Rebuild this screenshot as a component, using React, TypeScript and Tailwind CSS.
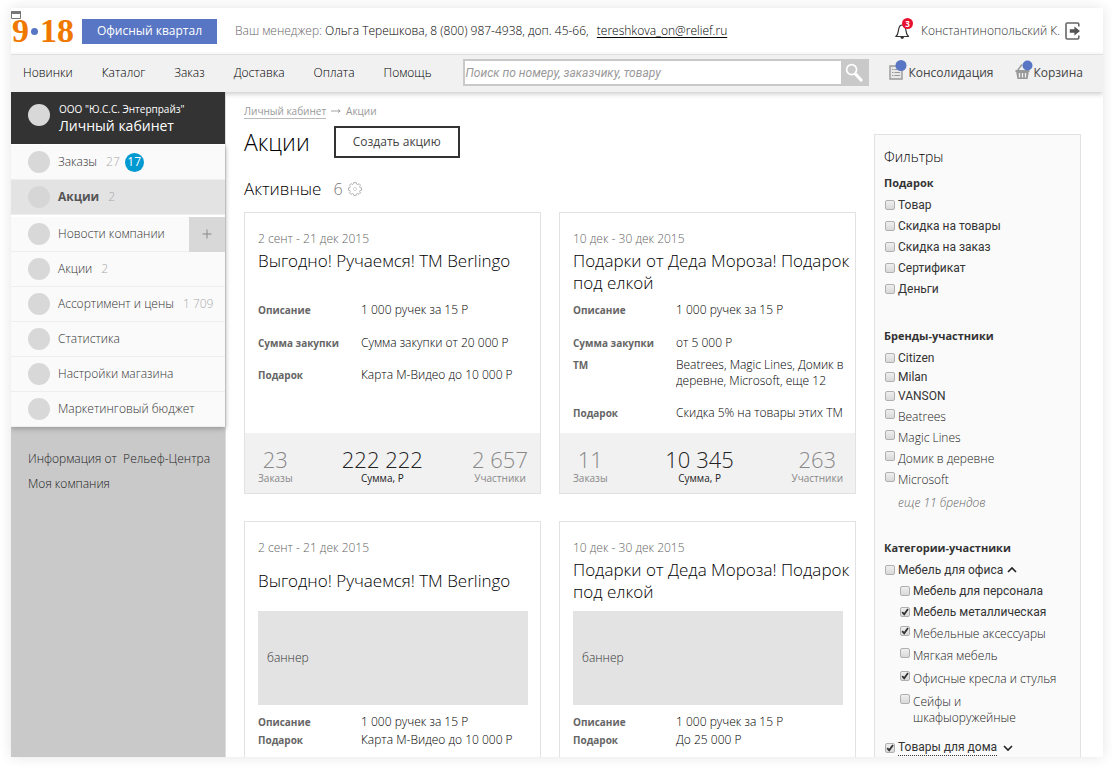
import React from "react";

const sans = "font-['Open_Sans','Noto_Sans',sans-serif]";
const roboto = "font-[Roboto,'Liberation_Sans',sans-serif]";

const navLinks = ["Новинки", "Каталог", "Заказ", "Доставка", "Оплата", "Помощь"];

type Row = { label: string; value: string; space: string };
type Promo = {
  id: number;
  date: string;
  title: string;
  banner?: boolean;
  rows: Row[];
  stats?: { orders: string; sum: string; people: string };
};

const promos: Promo[] = [
  {
    id: 1,
    date: "2 сент - 21 дек 2015",
    title: "Выгодно! Ручаемся! ТМ Berlingo",
    rows: [
      { label: "Описание", value: "1 000 ручек за 15 Р", space: "mt-2" },
      { label: "Сумма закупки", value: "Сумма закупки от 20 000 Р", space: "mt-[17px]" },
      { label: "Подарок", value: "Карта М-Видео до 10 000 Р", space: "mt-4" },
    ],
    stats: { orders: "23", sum: "222 222", people: "2 657" },
  },
  {
    id: 2,
    date: "10 дек - 30 дек 2015",
    title: "Подарки от Деда Мороза! Подарок под елкой",
    rows: [
      { label: "Описание", value: "1 000 ручек за 15 Р", space: "mt-2" },
      { label: "Сумма закупки", value: "от 5 000 Р", space: "mt-[17px]" },
      { label: "ТМ", value: "Beatrees, Magic Lines, Домик в деревне, Microsoft, еще 12", space: "mt-1.5" },
      { label: "Подарок", value: "Скидка 5% на товары этих ТМ", space: "mt-4" },
    ],
    stats: { orders: "11", sum: "10 345", people: "263" },
  },
  {
    id: 3,
    date: "2 сент - 21 дек 2015",
    title: "Выгодно! Ручаемся! ТМ Berlingo",
    banner: true,
    rows: [
      { label: "Описание", value: "1 000 ручек за 15 Р", space: "mt-[9px]" },
      { label: "Подарок", value: "Карта М-Видео до 10 000 Р", space: "mt-0.5" },
    ],
  },
  {
    id: 4,
    date: "10 дек - 30 дек 2015",
    title: "Подарки от Деда Мороза! Подарок под елкой",
    banner: true,
    rows: [
      { label: "Описание", value: "1 000 ручек за 15 Р", space: "mt-[9px]" },
      { label: "Подарок", value: "До 25 000 Р", space: "mt-0.5" },
    ],
  },
];

function Stat({ value, label, strong }: { value: string; label: string; strong?: boolean }) {
  return (
    <div className={strong ? "text-center text-[#222]" : "text-center text-[#888]"}>
      <div className="text-[22px] leading-6">{value}</div>
      <div className="text-[10px] leading-3.5 font-normal">{label}</div>
    </div>
  );
}

function Card({ promo }: { promo: Promo }) {
  return (
    <article className="flex min-w-0 flex-col border border-[#e2e2e2] bg-white">
      <div className="flex-1 pt-[18px] pr-1 pb-3 pl-[13px]">
        <p className="text-[12px] leading-4 text-[#666]">{promo.date}</p>
        <h3
          className={
            promo.banner
              ? "mt-[3px] flex min-h-11 items-center text-[17px] leading-[22px] text-black"
              : "mt-[3px] min-h-11 text-[17px] leading-[22px] text-black"
          }
        >
          {promo.title}
        </h3>
        {promo.banner && (
          <div className="mt-2 mr-2 flex h-[94px] items-center bg-[#e3e3e3] pl-[9px] text-[12px] text-[#333]">баннер</div>
        )}
        <dl>
          {promo.rows.map((r) => (
            <div key={r.label} className={`flex ${r.space}`}>
              <dt className="w-[103px] shrink-0 text-[10px] leading-4 font-bold text-[#666]">{r.label}</dt>
              <dd className="min-w-0 text-[12px] leading-4 text-black">{r.value}</dd>
            </div>
          ))}
        </dl>
      </div>
      {promo.stats && (
        <div className="flex h-[60px] shrink-0 items-start justify-between bg-[#f1f1f1] pt-3.5 pr-3 pl-[13px]">
          <Stat value={promo.stats.orders} label="Заказы" />
          <Stat value={promo.stats.sum} label="Сумма, Р" strong />
          <Stat value={promo.stats.people} label="Участники" />
        </div>
      )}
    </article>
  );
}

function Check({
  label,
  checked,
  light,
  dotted,
  row = "min-h-[21px]",
  arrow,
}: {
  label: string;
  checked?: boolean;
  light?: boolean;
  dotted?: boolean;
  row?: string;
  arrow?: "up" | "down";
}) {
  return (
    <label className={`flex items-start ${row}`}>
      <span className={light ? "relative flex h-2.5 w-[13px] shrink-0" : "relative mt-[3px] flex h-2.5 w-[13px] shrink-0"}>
        <input
          type="checkbox"
          defaultChecked={checked}
          className="peer size-2.5 appearance-none rounded-[2px] border border-[#b0b0b0] bg-linear-to-b from-[#efefef] to-[#d9d9d9]"
        />
        <svg viewBox="0 0 10 10" className="pointer-events-none absolute top-0 left-0 hidden size-2.5 peer-checked:block">
          <path d="M2.2 5.2 4.2 7.3 8 2" fill="none" stroke="#333" strokeWidth="1.8" />
        </svg>
      </span>
      <span
        className={
          light
            ? `${sans} text-[12px] leading-4 text-[#222]`
            : dotted
              ? `${roboto} border-b border-dotted border-[#333] text-[12px] leading-[15px] font-normal text-[#333]`
              : `${roboto} text-[12px] leading-4 font-normal text-[#333]`
        }
      >
        {label}
      </span>
      {arrow && (
        <svg viewBox="0 0 10 10" className={arrow === "up" ? "mt-[3px] ml-1 size-2.5" : "mt-[3px] ml-1.5 size-2.5"}>
          <path d={arrow === "up" ? "M1 7 5 3 9 7" : "M1 3 5 7 9 3"} fill="none" stroke="#222" strokeWidth="1.6" />
        </svg>
      )}
    </label>
  );
}

function SideItem({
  label,
  count,
  badge,
  active,
  plus,
}: {
  label: string;
  count?: string;
  badge?: string;
  active?: boolean;
  plus?: boolean;
}) {
  return (
    <li
      className={
        active
          ? "mb-0.5 flex h-[35px] items-center border-b border-[#eee] bg-[#e3e3e3] pl-[17px]"
          : "flex h-[35px] items-center border-b border-[#eee] bg-[#fafafa] pl-[17px]"
      }
    >
      <span className={active ? "size-[22px] rounded-full bg-[#d6d6d6]" : "size-[22px] rounded-full bg-[#d8d8d8]"} />
      <a
        href="#"
        className={active ? "ml-2 text-[12px] font-bold text-[#555]" : "ml-2 text-[12px] whitespace-nowrap text-[#333]"}
      >
        {label}
      </a>
      {count && <span className="ml-[9px] text-[12px] whitespace-nowrap text-[#aaa]">{count}</span>}
      {badge && (
        <span className="ml-[5px] flex size-[19px] items-center justify-center rounded-full bg-[#0099d0] text-[12px] font-normal text-white">
          {badge}
        </span>
      )}
      {plus && (
        <button
          type="button"
          aria-label="Добавить новость"
          className="ml-auto flex h-[35px] w-9 items-center justify-center bg-[#d8d8d8]"
        >
          <svg viewBox="0 0 10 10" className="size-2.5">
            <path d="M5 0.5V9.5M0.5 5H9.5" stroke="#888" strokeWidth="1" />
          </svg>
        </button>
      )}
    </li>
  );
}

function Header() {
  return (
    <header className="flex h-[46px] shrink-0 items-center bg-white pr-[22px]">
      <a href="#" aria-label="9-18" className="relative flex h-full w-[71px] shrink-0 items-center">
        <svg viewBox="0 0 10 8" className="absolute top-[3px] left-0 h-2 w-2.5">
          <path d="M0.5 0.5H9.5V7.5H0.5Z" fill="#fff" stroke="#777" />
          <path d="M0 0H10V3H0Z" fill="#777" />
        </svg>
        <span className="flex items-center pl-px font-['Liberation_Serif',serif] text-[34px] leading-8 font-bold text-[#f07800]">
          <span>9</span>
          <span className="mx-0.5 size-[7px] rounded-full bg-[#5976c4]" />
          <span>1</span>
          <span>8</span>
        </span>
      </a>
      <a
        href="#"
        className="flex h-[25px] w-[135px] items-center justify-center bg-[#5976c4] text-[12px] font-normal whitespace-nowrap text-white"
      >
        Офисный квартал
      </a>
      <p className="ml-[18px] text-[12px] whitespace-nowrap text-black">
        <span className="text-[#666]">Ваш менеджер:</span> Ольга Терешкова, 8 (800) 987-4938, доп. 45-66,{" "}
        <a href="mailto:tereshkova_on@relief.ru" className="ml-[5px] underline underline-offset-2">
          tereshkova_on@relief.ru
        </a>
      </p>
      <div className="ml-auto flex items-center">
        <button type="button" aria-label="Уведомления: 3" className="relative mr-2 h-5 w-[18px]">
          <svg viewBox="0 0 18 20" className="h-5 w-[18px]">
            <path
              d="M0.8 15.5C3.4 13.5 3.2 10.6 3.7 8 4.2 5.4 5.4 4 7.2 4 9 4 10.2 5.4 10.7 8 11.2 10.6 11 13.5 13.6 15.5Z"
              fill="#fff"
              stroke="#333"
              strokeWidth="1.2"
              strokeLinejoin="round"
            />
            <path d="M5.4 16C5.8 18.6 8.6 18.6 9 16Z" fill="#333" />
          </svg>
          <span className="absolute -top-[3px] right-0 flex size-[11px] items-center justify-center rounded-full bg-[#e8112d] text-[8px] leading-none font-bold text-white">
            3
          </span>
        </button>
        <span className="text-[12px] whitespace-nowrap text-[#333]">Константинопольский К.</span>
        <button type="button" aria-label="Выйти" className="ml-[5px]">
          <svg viewBox="0 0 16 18" className="h-[18px] w-4">
            <path d="M13.8 4.5V2.2Q13.8 1 12.6 1H2.2Q1 1 1 2.2V15.8Q1 17 2.2 17H12.6Q13.8 17 13.8 15.8V13.5" fill="none" stroke="#666" strokeWidth="1.6" />
            <path d="M4.8 7.2H9.4V4.6L15 9 9.4 13.4V10.8H4.8Z" fill="#555" />
          </svg>
        </button>
      </div>
    </header>
  );
}

function NavBar() {
  return (
    <nav className="relative z-10 flex h-[38px] shrink-0 items-center border-t border-[#e0e0e0] bg-[#f1f1f1] pr-5 pb-0.5 pl-3 shadow-[0_2px_5px_#ccc]">
      <div className="flex gap-[29px] text-[12px] text-black">
        {navLinks.map((l) => (
          <a key={l} href="#">
            {l}
          </a>
        ))}
      </div>
      <form className="ml-8 flex h-[27px] flex-1 border-2 border-[#c9c9c9] bg-white">
        <input
          type="text"
          aria-label="Поиск"
          placeholder="Поиск по номеру, заказчику, товару"
          className="min-w-0 flex-1 font-[Roboto,'Liberation_Sans',sans-serif] text-[12px] font-normal text-[#444] italic outline-none placeholder:text-[#999]"
        />
        <button type="button" aria-label="Найти" className="flex w-[26px] items-center justify-center bg-[#c9c9c9]">
          <svg viewBox="0 0 18 19" className="h-[19px] w-[18px]">
            <circle cx="6.6" cy="6.6" r="5" fill="none" stroke="#fff" strokeWidth="1.7" />
            <path d="M11 11.5 16 17" stroke="#fff" strokeWidth="3.2" strokeLinecap="round" />
          </svg>
        </button>
      </form>
      <a href="#" className="ml-5 flex items-center text-[12px] font-normal whitespace-nowrap text-[#444]">
        <svg viewBox="0 0 18 20" className="-mt-1.5 mr-px h-5 w-[18px]">
          <path d="M1 6H13V19H1Z" fill="#e8e8e8" stroke="#999" strokeWidth="1.4" />
          <path d="M3 9.5H4.4M5.4 9.5H11M3 12.5H4.4M5.4 12.5H11M3 15.5H4.4M5.4 15.5H11" stroke="#999" strokeWidth="1.2" />
          <circle cx="12" cy="5.5" r="5.5" fill="#5976c4" />
        </svg>
        Консолидация
      </a>
      <a href="#" className="ml-[22px] flex items-center text-[12px] font-normal whitespace-nowrap text-[#444]">
        <svg viewBox="0 0 18 20" className="-mt-1.5 h-5 w-[18px]">
          <path d="M2.5 10.5 7 4.5M12.5 10.5 9 5" stroke="#999" strokeWidth="1.4" />
          <path d="M0.5 10H14.5V12H13.8L12.6 19H2.4L1.2 12H0.5Z" fill="#999" />
          <path d="M4.5 13V17.5M7.5 13V17.5M10.5 13V17.5" stroke="#f1f1f1" strokeWidth="1.3" />
          <circle cx="12.5" cy="5.5" r="5" fill="#5976c4" />
        </svg>
        Корзина
      </a>
    </nav>
  );
}

function Sidebar() {
  return (
    <aside className="w-[215px] shrink-0 border-r border-[#ddd] bg-[#c9c9c9]">
      <div className="relative z-20 flex h-[52px] items-start bg-[#333] pt-3 pl-[17px]">
        <span className="size-[22px] shrink-0 rounded-full bg-[#d8d8d8]" />
        <div className="-mt-[3px] ml-[9px] font-normal text-white">
          <p className="text-[10px] leading-4">ООО "Ю.С.С. Энтерпрайз"</p>
          <p className="text-[14px] leading-[18px]">Личный кабинет</p>
        </div>
      </div>
      <ul className="bg-white pt-px shadow-[0_2px_5px_#999]">
        <SideItem label="Заказы" count="27" badge="17" />
        <SideItem label="Акции" count="2" active />
        <SideItem label="Новости компании" plus />
        <SideItem label="Акции" count="2" />
        <SideItem label="Ассортимент и цены" count="1 709" />
        <SideItem label="Статистика" />
        <SideItem label="Настройки магазина" />
        <SideItem label="Маркетинговый бюджет" />
      </ul>
      <div className="flex flex-col gap-[9px] pt-6 pl-[17px] text-[12px] leading-4 text-[#222]">
        <a href="#">Информация от&nbsp; Рельеф-Центра</a>
        <a href="#">Моя компания</a>
      </div>
    </aside>
  );
}

function Filters() {
  return (
    <aside className="mt-[42px] w-[207px] shrink-0 border border-b-0 border-[#e2e2e2] bg-[#fafafa] pr-4 pl-[9px]">
      <h2 className="pt-3 text-[14px] leading-5 text-black">Фильтры</h2>
      <h3 className="mt-2 text-[11px] leading-4 font-bold text-[#333]">Подарок</h3>
      <div className="mt-1.5 pl-px">
        <Check label="Товар" />
        <Check label="Скидка на товары" />
        <Check label="Скидка на заказ" />
        <Check label="Сертификат" />
        <Check label="Деньги" />
      </div>
      <h3 className="mt-[26px] text-[11px] leading-4 font-bold text-[#333]">Бренды-участники</h3>
      <div className="mt-1.5 pl-px">
        <Check label="Citizen" row="min-h-[19px]" />
        <Check label="Milan" row="min-h-[19px]" />
        <Check label="VANSON" row="min-h-[21px]" />
        <Check label="Beatrees" light />
        <Check label="Magic Lines" light />
        <Check label="Домик в деревне" light />
        <Check label="Microsoft" light />
      </div>
      <a href="#" className="mt-0.5 ml-3.5 block text-[12px] leading-4 text-[#666] italic">
        еще 11 брендов
      </a>
      <h3 className="mt-[29px] text-[11px] leading-4 font-bold text-[#333]">Категории-участники</h3>
      <div className="mt-1.5 pl-px">
        <Check label="Мебель для офиса" arrow="up" />
        <div className="pl-[15px]">
          <Check label="Мебель для персонала" />
          <Check label="Мебель металлическая" checked row="min-h-[22px]" />
          <Check label="Мебельные аксессуары" checked light row="min-h-[22px]" />
          <Check label="Мягкая мебель" light row="min-h-[23px]" />
          <Check label="Офисные кресла и стулья" checked light row="min-h-[23px]" />
          <Check label="Сейфы и шкафыоружейные" light />
        </div>
        <div className="mt-3.5">
          <Check label="Товары для дома" checked dotted arrow="down" />
        </div>
      </div>
    </aside>
  );
}

export default function App() {
  return (
    <div className={`h-screen bg-white pt-2 pr-2.5 pb-3 pl-[11px] font-light ${sans}`}>
      <div className="h-full shadow-[0_0_12px_#e4e4e4]">
        <div className="flex h-full flex-col overflow-hidden bg-white">
          <Header />
          <NavBar />
          <div className="flex min-h-0 flex-1">
            <Sidebar />
            <div className="flex min-w-0 flex-1 gap-[18px] pr-[22px] pl-[18px]">
              <main className="min-w-0 flex-1">
                <div className="flex items-center gap-[5px] pt-[11px] text-[10px] leading-4 font-normal text-[#999]">
                  <a href="#" className="border-b border-[#bbb] leading-[14px]">
                    Личный кабинет
                  </a>
                  <svg viewBox="0 0 10 6" className="h-1.5 w-2.5">
                    <path d="M0 3H9M7 1.4 9.2 3 7 4.6" fill="none" stroke="#999" strokeWidth="0.9" />
                  </svg>
                  <span>Акции</span>
                </div>
                <div className="mt-[7px] flex items-center gap-6">
                  <h1 className="text-[23px] leading-8 text-black">Акции</h1>
                  <button type="button" className="h-8 w-[126px] border-2 border-[#333] text-[12px] font-normal text-[#444]">
                    Создать акцию
                  </button>
                </div>
                <div className="mt-5 flex items-center">
                  <h2 className="text-[17px] leading-[22px] text-black">Активные</h2>
                  <span className="ml-3 text-[16px] leading-[22px] text-[#777]">6</span>
                  <svg viewBox="0 0 14 14" className="ml-[5px] size-3.5">
                    <path
                      d="M5.7 0.6H8.3L8.7 2.2 9.7 2.6 11.1 1.7 12.5 3.2 11.6 4.6 12 5.5 13.5 5.8V8.2L12 8.5 11.6 9.5 12.5 10.9 11 12.4 9.6 11.5 8.6 11.9 8.2 13.4H5.8L5.4 11.9 4.4 11.5 3 12.4 1.5 10.9 2.4 9.5 2 8.5 0.5 8.2V5.8L2 5.5 2.4 4.5 1.5 3.1 3 1.6 4.4 2.5 5.3 2.1Z"
                      fill="none"
                      stroke="#aaa"
                      strokeWidth="0.9"
                    />
                    <circle cx="7" cy="7" r="1.6" fill="none" stroke="#ccc" strokeWidth="0.8" />
                  </svg>
                </div>
                <div className="mt-3 grid grid-cols-2 gap-x-[18px] gap-y-[27px]">
                  {promos.map((p) => (
                    <Card key={p.id} promo={p} />
                  ))}
                </div>
              </main>
              <Filters />
            </div>
          </div>
        </div>
      </div>
    </div>
  );
}
